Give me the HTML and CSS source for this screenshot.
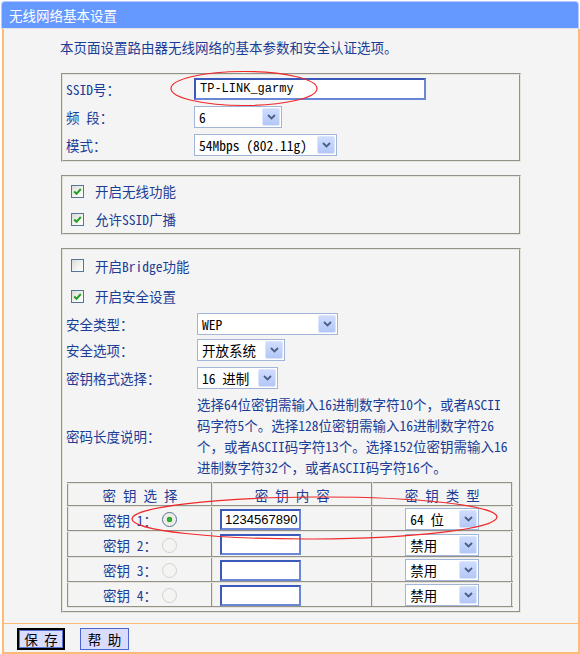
FILE: index.html
```html
<!DOCTYPE html>
<html lang="zh-CN">
<head>
<meta charset="utf-8">
<title>无线网络基本设置</title>
<link rel="stylesheet" href="styles.css">
</head>
<body>
<div class="page">
  <div class="header">无线网络基本设置</div>
  <div class="main">
    <p class="intro">本页面设置路由器无线网络的基本参数和安全认证选项。</p>

    <div class="box box1">
      <div class="row"><span class="lbl">SSID号：</span><span class="input ssid">TP-LINK_garmy</span></div>
      <div class="row"><span class="lbl">频&nbsp;段：</span>
        <span class="sel w88"><span class="val">6</span><span class="dd"><svg width="9" height="6" viewBox="0 0 9 6"><path d="M1 1 L4.5 4.5 L8 1" fill="none" stroke="#4a5f86" stroke-width="1.8"/></svg></span></span></div>
      <div class="row"><span class="lbl">模式：</span>
        <span class="sel w143"><span class="val">54Mbps (802.11g)</span><span class="dd"><svg width="9" height="6" viewBox="0 0 9 6"><path d="M1 1 L4.5 4.5 L8 1" fill="none" stroke="#4a5f86" stroke-width="1.8"/></svg></span></span></div>
    </div>

    <div class="box box2">
      <div class="crow"><span class="cb"><svg width="11" height="11" viewBox="0 0 11 11"><path d="M2.2 5.5 L4.5 7.8 L8.8 3" fill="none" stroke="#21a121" stroke-width="2"/></svg></span><span>开启无线功能</span></div>
      <div class="crow"><span class="cb"><svg width="11" height="11" viewBox="0 0 11 11"><path d="M2.2 5.5 L4.5 7.8 L8.8 3" fill="none" stroke="#21a121" stroke-width="2"/></svg></span><span>允许SSID广播</span></div>
    </div>

    <div class="box box3">
      <div class="crow bridge"><span class="cb"></span><span>开启Bridge功能</span></div>
      <div class="crow sec"><span class="cb"><svg width="11" height="11" viewBox="0 0 11 11"><path d="M2.2 5.5 L4.5 7.8 L8.8 3" fill="none" stroke="#21a121" stroke-width="2"/></svg></span><span>开启安全设置</span></div>
      <div class="row r3 type"><span class="lbl">安全类型：</span>
        <span class="sel w141"><span class="val">WEP</span><span class="dd"><svg width="9" height="6" viewBox="0 0 9 6"><path d="M1 1 L4.5 4.5 L8 1" fill="none" stroke="#4a5f86" stroke-width="1.8"/></svg></span></span></div>
      <div class="row r3"><span class="lbl">安全选项：</span>
        <span class="sel w88"><span class="val">开放系统</span><span class="dd"><svg width="9" height="6" viewBox="0 0 9 6"><path d="M1 1 L4.5 4.5 L8 1" fill="none" stroke="#4a5f86" stroke-width="1.8"/></svg></span></span></div>
      <div class="row r3"><span class="lbl">密钥格式选择：</span>
        <span class="sel w81"><span class="val">16 进制</span><span class="dd"><svg width="9" height="6" viewBox="0 0 9 6"><path d="M1 1 L4.5 4.5 L8 1" fill="none" stroke="#4a5f86" stroke-width="1.8"/></svg></span></span></div>
      <div class="row r3 desc-row"><span class="lbl">密码长度说明：</span>
        <p class="desc">选择64位密钥需输入16进制数字符10个，或者ASCII<br>码字符5个。选择128位密钥需输入16进制数字符26<br>个，或者ASCII码字符13个。选择152位密钥需输入16<br>进制数字符32个，或者ASCII码字符16个。</p></div>

      <table class="keys">
        <colgroup><col class="c1"><col class="c2"><col class="c3"></colgroup>
        <tr class="head"><th><span class="sp">密钥选择</span></th><th><span class="sp">密钥内容</span></th><th><span class="sp">密钥类型</span></th></tr>
        <tr><td class="kc"><span>密钥 1：</span><span class="radio on"></span></td><td class="kv"><span class="input key">1234567890</span></td><td class="kt"><span class="sel w74"><span class="val">64 位</span><span class="dd"><svg width="9" height="6" viewBox="0 0 9 6"><path d="M1 1 L4.5 4.5 L8 1" fill="none" stroke="#4a5f86" stroke-width="1.8"/></svg></span></span></td></tr>
        <tr><td class="kc"><span>密钥 2：</span><span class="radio"></span></td><td class="kv"><span class="input key"></span></td><td class="kt"><span class="sel w74"><span class="val">禁用</span><span class="dd"><svg width="9" height="6" viewBox="0 0 9 6"><path d="M1 1 L4.5 4.5 L8 1" fill="none" stroke="#4a5f86" stroke-width="1.8"/></svg></span></span></td></tr>
        <tr><td class="kc"><span>密钥 3：</span><span class="radio"></span></td><td class="kv"><span class="input key"></span></td><td class="kt"><span class="sel w74"><span class="val">禁用</span><span class="dd"><svg width="9" height="6" viewBox="0 0 9 6"><path d="M1 1 L4.5 4.5 L8 1" fill="none" stroke="#4a5f86" stroke-width="1.8"/></svg></span></span></td></tr>
        <tr><td class="kc"><span>密钥 4：</span><span class="radio"></span></td><td class="kv"><span class="input key"></span></td><td class="kt"><span class="sel w74"><span class="val">禁用</span><span class="dd"><svg width="9" height="6" viewBox="0 0 9 6"><path d="M1 1 L4.5 4.5 L8 1" fill="none" stroke="#4a5f86" stroke-width="1.8"/></svg></span></span></td></tr>
      </table>
    </div>

    <div class="footer">
      <button class="b def">保 存</button>
      <button class="b">帮 助</button>
    </div>
  </div>

  <svg class="marks" width="580" height="654" viewBox="0 0 580 654">
    <ellipse cx="244" cy="87.5" rx="73" ry="17" fill="none" stroke="#f0282a" stroke-width="1.2"/>
    <ellipse cx="314.5" cy="517" rx="182.5" ry="21" fill="none" stroke="#f0282a" stroke-width="1.2" transform="rotate(-0.3 314.5 517)"/>
  </svg>
</div>
</body>
</html>
```

FILE: styles.css
```css
* { box-sizing: border-box; }

body {
  margin: 0;
  background: #ffffff;
  font-family: "Noto Sans Mono CJK SC", "Noto Sans CJK SC", sans-serif;
  font-size: 13.5px;
  color: #1b3d96;
}

.page {
  position: relative;
  width: 580px;
  height: 654px;
}

.header {
  margin: 1px 0 0 1px;
  width: 578px;
  height: 28px;
  background: #6699ff;
  border: 1px solid #b4cbff;
  border-bottom: 1px solid #dfe3ea;
  border-radius: 4px 4px 0 0;
  color: #ffffff;
  padding-left: 7px;
  line-height: 26px;
}

.main {
  margin-left: 2px;
  width: 578px;
  height: 625px;
  background: #f4f4f4;
  border-left: 2px solid #fdba78;
  border-right: 2px solid #fdba78;
  border-bottom: 2px solid #fdba78;
  display: flex;
  flex-direction: column;
}

.intro {
  margin: 0;
  padding: 9px 0 0 56px;
  line-height: 18px;
}

.box {
  margin-left: 57px;
  width: 460px;
  border: 2px groove #e6e4da;
}

.box1 { margin-top: 17px; padding: 0 0 1px 3px; }
.box2 { margin-top: 13px; }
.box3 { margin-top: 13px; padding: 0 0 3px 0; }

.row {
  display: flex;
  align-items: center;
  height: 28px;
}

.box1 .lbl { width: 128px; }
.box3 .lbl { width: 131px; }
.r3 { padding-left: 3px; }
.box3 .type { height: 25px; }

.crow {
  display: flex;
  align-items: center;
  height: 28px;
  padding-left: 8px;
  gap: 11px;
}
.box3 .bridge { height: 31px; }
.box3 .sec { height: 30px; }

.cb {
  width: 13px;
  height: 13px;
  border: 1px solid #54759c;
  background: linear-gradient(135deg, #dcdcd6 0%, #f4f4f1 60%, #ffffff 100%);
  display: flex;
  align-items: center;
  justify-content: center;
  flex: none;
}

.input {
  display: inline-block;
  height: 22px;
  background: #ffffff;
  border: 2px solid #3a59b8;
  border-right-color: #6a86d6;
  border-bottom-color: #6a86d6;
  line-height: 18px;
  padding-left: 3px;
  color: #000000;
  white-space: nowrap;
  text-align: left;
}
.ssid { width: 232px; font-family: "Liberation Mono", "Noto Sans CJK SC", monospace; font-size: 12px; padding-left: 4px; }
.key { width: 81px; height: 21px; line-height: 17px; font-family: "Liberation Sans", Arial, sans-serif; font-size: 13px; }

.sel {
  display: inline-flex;
  align-items: stretch;
  height: 22px;
  background: #ffffff;
  border: 1px solid #a2b5d6;
  color: #000000;
  white-space: nowrap;
  text-align: left;
}
.sel .val {
  flex: 1;
  padding-left: 4px;
  line-height: 20px;
  text-align: left;
}
.sel .dd {
  width: 18px;
  margin: 1px;
  border: 1px solid #dbe5fd;
  border-radius: 2px;
  background: linear-gradient(#cfdcfd, #b3c7f7);
  display: flex;
  align-items: center;
  justify-content: center;
}
.w88 { width: 88px; }
.w143 { width: 143px; }
.w141 { width: 141px; }
.w81 { width: 81px; }
.w74 { width: 74px; height: 22px; }

.desc-row { height: auto; padding-top: 2px; }
.desc {
  margin: 0;
  line-height: 21px;
  white-space: nowrap;
}

.keys {
  margin: 4px 0 0 4px;
  width: 446px;
  border-collapse: collapse;
  border: 2px groove #e6e4da;
}
.keys .c1 { width: 145px; }
.keys .c2 { width: 161px; }
.keys .c3 { width: 140px; }

.keys th, .keys td {
  border: 2px groove #e6e4da;
  padding: 0;
  font-weight: normal;
}
.keys th { height: 23px; text-align: center; }
.keys td { height: 25px; }
.sp { letter-spacing: 7px; padding-left: 7px; }

.kc { text-align: center; }
.kc span { vertical-align: middle; }
.kv { padding-left: 7px !important; }
.kv .input { vertical-align: middle; }
.kt { text-align: center; }
.kt .sel { vertical-align: middle; }

.radio {
  display: inline-block;
  width: 15px;
  height: 15px;
  margin-left: 5px;
  border-radius: 50%;
  border: 1px solid #d2d2cc;
  background: #f4f4f2;
}
.radio.on {
  border-color: #56708f;
  background: radial-gradient(circle at 50% 50%, #3cb83c 0, #22a322 2.5px, #e8e8e2 3px, #fafaf8 100%);
}

.footer {
  margin-top: auto;
  border-top: 1px solid #fdba78;
  height: 29px;
  padding: 4px 0 0 13px;
  display: flex;
  gap: 15px;
  align-items: flex-start;
}
.b {
  height: 22px;
  padding: 0;
  background: #d9dcfd;
  border: 1px solid #4a64d0;
  font-family: inherit;
  font-size: 13.5px;
  color: #000000;
  width: 49px;
  line-height: 18px;
}
.b.def {
  width: 48px;
  border: 2px solid #000000;
  box-shadow: inset 0 0 0 1px #5a74d6;
}

.marks {
  position: absolute;
  left: 0;
  top: 0;
  pointer-events: none;
}
```
